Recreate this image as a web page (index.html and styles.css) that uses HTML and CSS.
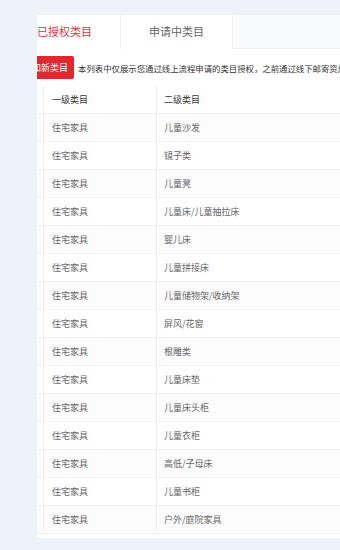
FILE: index.html
```html
<!DOCTYPE html>
<html lang="zh-CN">
<head>
<meta charset="utf-8">
<link rel="stylesheet" href="styles.css">
</head>
<body>
<div class="panel">
  <div class="inner">
    <div class="tabs">
      <div class="tab active">已授权类目</div>
      <div class="tab">申请中类目</div>
    </div>
    <div class="toolbar">
      <button class="btn">添加新类目</button>
      <span class="desc">本列表中仅展示您通过线上流程申请的类目授权，之前通过线下邮寄资质申请的类目授权请联系对接人员查询</span>
    </div>
    <table class="grid">
      <thead>
        <tr><th class="c0"></th><th class="c1">一级类目</th><th class="c2">二级类目</th></tr>
      </thead>
      <tbody>
        <tr><td class="c0"></td><td class="c1">住宅家具</td><td class="c2">儿童沙发</td></tr>
        <tr><td class="c0"></td><td class="c1">住宅家具</td><td class="c2">镜子类</td></tr>
        <tr><td class="c0"></td><td class="c1">住宅家具</td><td class="c2">儿童凳</td></tr>
        <tr><td class="c0"></td><td class="c1">住宅家具</td><td class="c2">儿童床/儿童抽拉床</td></tr>
        <tr><td class="c0"></td><td class="c1">住宅家具</td><td class="c2">婴儿床</td></tr>
        <tr><td class="c0"></td><td class="c1">住宅家具</td><td class="c2">儿童拼接床</td></tr>
        <tr><td class="c0"></td><td class="c1">住宅家具</td><td class="c2">儿童储物架/收纳架</td></tr>
        <tr><td class="c0"></td><td class="c1">住宅家具</td><td class="c2">屏风/花窗</td></tr>
        <tr><td class="c0"></td><td class="c1">住宅家具</td><td class="c2">根雕类</td></tr>
        <tr><td class="c0"></td><td class="c1">住宅家具</td><td class="c2">儿童床垫</td></tr>
        <tr><td class="c0"></td><td class="c1">住宅家具</td><td class="c2">儿童床头柜</td></tr>
        <tr><td class="c0"></td><td class="c1">住宅家具</td><td class="c2">儿童衣柜</td></tr>
        <tr><td class="c0"></td><td class="c1">住宅家具</td><td class="c2">高低/子母床</td></tr>
        <tr><td class="c0"></td><td class="c1">住宅家具</td><td class="c2">儿童书柜</td></tr>
        <tr><td class="c0"></td><td class="c1">住宅家具</td><td class="c2">户外/庭院家具</td></tr>
      </tbody>
    </table>
  </div>
</div>
</body>
</html>
```
FILE: styles.css
```css
html, body {
  margin: 0;
  padding: 0;
}
body {
  background: #eef2f9;
  font-family: "Noto Sans CJK SC", "Noto Sans", sans-serif;
  width: 340px;
  height: 550px;
  overflow: hidden;
}
.panel {
  margin: 15px 0 0 37px;
  height: 523px;
  background: #fff;
  overflow: hidden;
}
.inner {
  margin-left: -28px;
  width: 720px;
}
.tabs {
  display: flex;
  height: 34px;
  background: #f9fafb;
  border-bottom: 1px solid #eef0f3;
  box-sizing: border-box;
}
.tab {
  width: 112px;
  height: 34px;
  line-height: 33px;
  text-align: center;
  font-size: 11px;
  color: #666;
  background: #fff;
  border-right: 1px solid #eef0f3;
  box-sizing: border-box;
}
.tab.active {
  color: #d9363e;
}
.toolbar {
  display: flex;
  align-items: center;
  padding: 7px 0 0 8px;
  height: 23px;
}
.btn {
  flex: none;
  height: 23px;
  padding: 0 6px;
  border: 0;
  border-radius: 2px;
  background: #e0282e;
  color: #fff;
  font-family: inherit;
  font-size: 9px;
  line-height: 23px;
}
.desc {
  margin-left: 4px;
  font-size: 8.4px;
  color: #333;
  white-space: nowrap;
}
.grid {
  margin: 7px 0 0 8px;
  border-collapse: collapse;
  font-size: 9px;
}
.grid th, .grid td {
  height: 27px;
  padding: 0 7px;
  text-align: left;
  border-bottom: 1px solid #f2f3f5;
  white-space: nowrap;
}
.grid th {
  font-weight: normal;
  color: #333;
  background: #fff;
}
.grid td {
  color: #666;
}
.grid tbody tr:nth-child(odd) td {
  background: #fcfcfd;
}
.grid .c0 {
  width: 12px;
  border-right: 1px solid #eceef2;
}
.grid .c1 {
  width: 97px;
  padding-left: 8px;
  border-right: 1px solid #eceef2;
}
.grid .c2 {
  width: 400px;
}
```
